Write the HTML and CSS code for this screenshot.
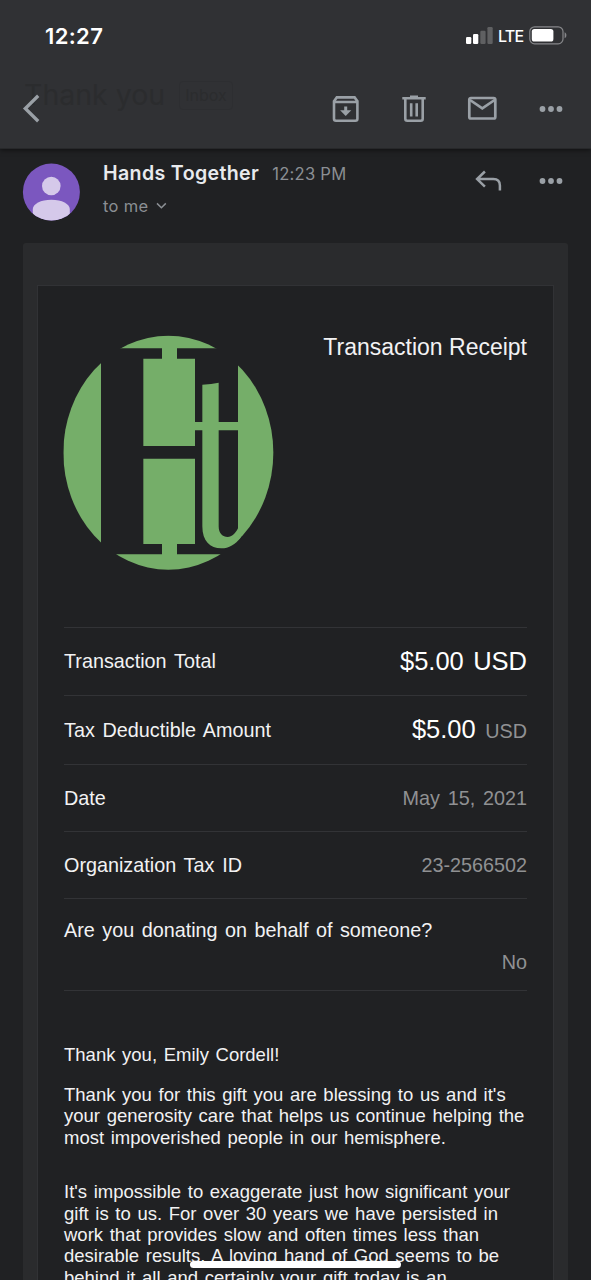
FILE: index.html
```html
<!DOCTYPE html>
<html lang="en">
<head>
<meta charset="utf-8">
<title>Thank you</title>
<link rel="stylesheet" href="styles.css">
</head>
<body>
<div class="screen">
  <header class="topbar">
    <div class="status">
      <span class="clock">12:27</span>
      <div class="status-right">
        <svg class="signal" width="27" height="17" viewBox="0 0 27 17"><g fill="#fff"><rect x="0" y="10" width="5.3" height="7" rx="1.2"/><rect x="7" y="7" width="5.3" height="10" rx="1.2"/></g><g fill="#5f6062"><rect x="14.3" y="3.8" width="5.3" height="13.2" rx="1.2"/><rect x="21.4" y="0" width="5.3" height="17" rx="1.2"/></g></svg>
        <span class="lte">LTE</span>
        <svg class="battery" width="39" height="19" viewBox="0 0 39 19"><rect x=".8" y=".8" width="33.2" height="17" rx="4.8" fill="none" stroke="#86878a" stroke-width="1.2"/><rect x="2.8" y="2.9" width="21.6" height="12.6" rx="2.6" fill="#fff"/><path d="M35.6 6.3c2.4.8 2.4 5.2 0 6z" fill="#86878a"/></svg>
      </div>
    </div>
    <div class="subject"><span class="subject-text">Thank you</span><span class="label">Inbox</span></div>
    <nav class="toolbar">
      <svg class="back" width="18" height="29" viewBox="0 0 18 29"><path d="M16.2 1.8 3.3 14.5l12.9 12.7" fill="none" stroke="#9aa0a6" stroke-width="3.3"/></svg>
      <div class="actions">
        <svg width="28" height="28" viewBox="0 0 28 28" fill="none" stroke="#9aa0a6" stroke-width="2.6"><path d="M2 6.2 4.8 2.4h17.8l2.8 3.8v17.5a2 2 0 0 1-2 2H4a2 2 0 0 1-2-2zM2 7h23.4"/><path d="M13.7 11.5v5" stroke-width="3"/><path d="M8.1 15.3h11.2L13.7 21z" fill="#9aa0a6" stroke="none"/></svg>
        <svg width="24" height="28" viewBox="0 0 24 28" fill="none" stroke="#9aa0a6" stroke-width="2.6"><path d="M.3 3.3h23.4M8 1.8h8M3.3 4v19.7a2 2 0 0 0 2 2h13.4a2 2 0 0 0 2-2V4M9.2 8.2v13.4M14.7 8.2v13.4"/></svg>
        <svg width="30" height="25" viewBox="0 0 30 25" fill="none" stroke="#9aa0a6" stroke-width="2.7"><rect x="2.3" y="2" width="26" height="20.5" rx="1.6"/><path d="M3 4 15.3 12.4 27.6 4"/></svg>
        <svg width="24" height="8" viewBox="0 0 24 8" fill="#9aa0a6"><circle cx="3.5" cy="4" r="2.9"/><circle cx="12" cy="4" r="2.9"/><circle cx="20.5" cy="4" r="2.9"/></svg>
      </div>
    </nav>
  </header>

  <section class="sender">
    <svg class="avatar" width="58" height="58" viewBox="0 0 58 58"><clipPath id="face"><circle cx="29.4" cy="29" r="28.5"/></clipPath><g clip-path="url(#face)"><rect width="58" height="58" fill="#7b57bf"/><circle cx="29.3" cy="23" r="9.3" fill="#d5c9ea"/><path d="M10.8 58V46c0-5 8-9.3 18.6-9.3S47.8 41 47.8 46v12z" fill="#d5c9ea"/></g></svg>
    <div class="who">
      <div class="who-line"><span class="name">Hands Together</span><span class="time">12:23 PM</span></div>
      <div class="to"><span>to me</span><svg width="11" height="8" viewBox="0 0 11 8"><path d="M1 1.4 5.4 5.8 9.8 1.4" fill="none" stroke="#8b8f94" stroke-width="1.5"/></svg></div>
    </div>
    <div class="sender-actions">
      <svg width="27" height="21" viewBox="0 0 27 21" fill="none" stroke="#9aa0a6" stroke-width="2.5"><path d="M9.9 1.5 2.1 9.1l7.8 7.6M2.6 9.1h15.7c4.4 0 6.6 2.5 6.6 6.5v4.8"/></svg>
      <svg width="24" height="8" viewBox="0 0 24 8" fill="#9aa0a6"><circle cx="3.5" cy="4" r="2.9"/><circle cx="12" cy="4" r="2.9"/><circle cx="20.5" cy="4" r="2.9"/></svg>
    </div>
  </section>

  <main class="mail">
    <article class="receipt">
      <div class="receipt-head">
        <svg class="logo" width="211" height="235" viewBox="72 44 633 705" fill="#75ae69"><clipPath id="oval"><ellipse cx="385" cy="397" rx="315" ry="351"/></clipPath><g clip-path="url(#oval)"><path d="M70 45h113v705H70zM594 45h110v705H594zM183 45h411v39H183zM183 702h411v48H183z"/></g><path d="M366 80h45v35h54v190h22V193q28-1 49-6v118h60v25h-60v288c0 22 12 32 27 32 13 0 23-10 31-26l8 28c-16 20-35 32-58 32-34 0-57-22-57-66V330h-22v47H310V115h56zM310 415h155v256h-54v35h-45v-35h-56z"/></svg>
        <h1 class="title">Transaction Receipt</h1>
      </div>
      <div class="rows">
        <div class="row row-total"><span>Transaction Total</span><span class="amount">$5.00 USD</span></div>
        <div class="row row-tax"><span>Tax Deductible Amount</span><span class="value"><span class="amount">$5.00</span> USD</span></div>
        <div class="row"><span>Date</span><span class="value">May 15, 2021</span></div>
        <div class="row"><span>Organization Tax ID</span><span class="value">23-2566502</span></div>
        <div class="row row-question"><span>Are you donating on behalf of someone?</span><span class="value">No</span></div>
      </div>
      <div class="message">
        <p>Thank you, Emily Cordell!</p>
        <p>Thank you for this gift you are blessing to us and it's<br>your generosity care that helps us continue helping the<br>most impoverished people in our hemisphere.</p>
        <p class="story">It's impossible to exaggerate just how significant your<br>gift is to us. For over 30 years we have persisted in<br>work that provides slow and often times less than<br>desirable results. A loving hand of God seems to be<br>behind it all and certainly your gift today is an</p>
      </div>
    </article>
  </main>
  <div class="home-indicator"></div>
</div>
</body>
</html>
```
FILE: styles.css
```css
* { box-sizing: border-box; }
body { margin: 0; background: #202124; }
svg { display: block; flex: none; }
.screen {
  position: relative;
  width: 591px;
  height: 1280px;
  overflow: hidden;
  display: flex;
  flex-direction: column;
  background: #202123;
  font-family: Inter, "Liberation Sans", sans-serif;
}

.topbar {
  position: relative;
  flex: none;
  height: 149px;
  background: #303134;
  border-bottom: 1px solid #27282a;
  box-shadow: 0 1px 5px rgba(0, 0, 0, .55);
}
.status {
  display: flex;
  justify-content: space-between;
  height: 72px;
  padding: 26px 23px 0 45px;
  color: #fff;
}
.clock { font-size: 22px; line-height: 20px; font-weight: 600; letter-spacing: .35px; }
.status-right { display: flex; align-items: flex-start; height: 20px; }
.signal { margin-top: 1px; }
.lte { margin: 0 5px 0 5px; width: 26px; font-size: 16px; line-height: 21px; font-weight: 500; letter-spacing: -.7px; }
.subject {
  position: absolute;
  left: 24px;
  top: 79px;
  display: flex;
  align-items: center;
  gap: 14px;
  color: #2b2c2e;
}
.subject-text { font-size: 28.5px; line-height: 32px; letter-spacing: 0; }
.label { padding: 0 5px; border: 1px solid #2d2e31; border-radius: 4px; font-size: 16px; line-height: 27px; }
.toolbar {
  position: relative;
  display: flex;
  align-items: center;
  justify-content: space-between;
  height: 73px;
  padding: 0 28px 0 22px;
}
.actions { display: flex; align-items: center; width: 231px; justify-content: space-between; }

.sender { display: flex; flex: none; height: 94px; padding: 14px 28px 0 22px; }
.who { margin: -1px 0 0 23px; color: #8b8f94; }
.who-line { display: flex; align-items: baseline; gap: 13px; line-height: 22px; }
.name { color: #e8eaed; font-size: 19.6px; font-weight: 600; letter-spacing: .35px; }
.time { font-size: 16.6px; letter-spacing: .25px; }
.to { display: flex; align-items: center; gap: 7px; margin-top: 10px; font-size: 16.5px; line-height: 22px; letter-spacing: .35px; }
.sender-actions { display: flex; align-items: center; gap: 37px; height: 35px; margin-left: auto; }

.mail { flex: none; width: 545px; height: 1040px; margin-left: 23px; padding: 42px 14px 0; background: #2a2b2d; border-radius: 3px 3px 0 0; }
.receipt {
  height: 1000px;
  padding: 49px 26px 0;
  background: #202123;
  border: 1px solid #313235;
  color: #f2f2f3;
  font-family: "Liberation Sans", Arial, sans-serif;
  font-size: 19.8px;
}
.receipt-head { display: flex; justify-content: space-between; height: 292px; }
.title { margin: -1px 0 0; font-size: 23px; line-height: 26px; font-weight: 400; }
.logo { overflow: visible; }
.rows { border-top: 1px solid #323336; }
.row {
  display: flex;
  justify-content: space-between;
  align-items: center;
  height: 67px;
  padding-top: 1px;
  border-bottom: 1px solid #323336;
  word-spacing: 2.3px;
}
.row-total { height: 68px; padding-top: 0; }
.row-tax { height: 69px; padding-top: 0; }
.amount { color: #fff; font-size: 25.5px; margin-top: -1px; }
.value { color: #909193; }
.row-tax .value { margin-top: -1px; word-spacing: 4px; }
.row-question { display: block; height: 92px; padding-top: 17px; line-height: 28px; word-spacing: 2px; }
.row-question span { display: block; }
.row-question .value { margin-top: 4px; text-align: right; }
.message { padding-top: 53px; font-size: 18.5px; line-height: 21.4px; word-spacing: 1.5px; white-space: nowrap; }
.message p { margin: 0 0 18.6px; }
.message .story { margin-top: 33px; }

.home-indicator { position: absolute; left: 190px; top: 1261px; width: 211px; height: 7px; border-radius: 4px; background: #fff; }
```
